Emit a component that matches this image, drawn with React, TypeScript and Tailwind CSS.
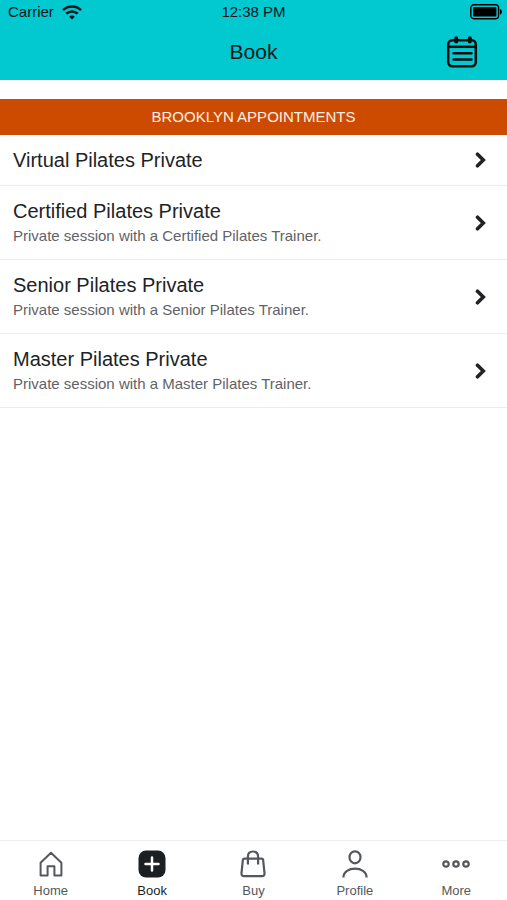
import type { ReactNode } from "react";

type Appointment = { title: string; description?: string };

const appointments: Appointment[] = [
  { title: "Virtual Pilates Private" },
  { title: "Certified Pilates Private", description: "Private session with a Certified Pilates Trainer." },
  { title: "Senior Pilates Private", description: "Private session with a Senior Pilates Trainer." },
  { title: "Master Pilates Private", description: "Private session with a Master Pilates Trainer." },
];

function WifiIcon() {
  return (
    <svg width="20" height="15" viewBox="0 0 20 15" fill="none" stroke="currentColor" strokeWidth="2.5" aria-hidden="true">
      <path d="M1 5.2C6 .3 14 .3 19 5.200" />
      <path d="M4.300 8.700c3.300-3.100 8.100-3.100 11.400 0" />
      <path d="M7.200 11.700c1.600-1.600 4-1.600 5.600 0L10 14.600Z" fill="currentColor" stroke="none" />
    </svg>
  );
}

function BatteryIcon() {
  return (
    <svg width="33" height="16" viewBox="0 0 33 16" fill="none" aria-hidden="true">
      <rect x="0.8" y="0.8" width="27.8" height="14" rx="3.2" stroke="currentColor" strokeWidth="1.4" />
      <rect x="3" y="3" width="23.4" height="9.6" rx="1" fill="currentColor" />
      <path d="M30 5c2.6.6 2.6 5 0 5.6Z" fill="currentColor" />
    </svg>
  );
}

function CalendarIcon() {
  return (
    <svg width="32" height="32" viewBox="0 0 32 32" fill="none" stroke="currentColor" strokeWidth="2.5" strokeLinecap="round" aria-hidden="true">
      <rect x="2.2" y="4.2" width="27.6" height="26" rx="4" />
      <path d="M2.2 10.8h27.6" strokeLinecap="butt" />
      <path d="M10.200 2.200v3.200M23.800 2.200v3.200" strokeWidth="4" />
      <path d="M7.500 17.200h18M7.500 23.600h18" strokeWidth="2.500" />
    </svg>
  );
}

function ChevronIcon() {
  return (
    <svg className="shrink-0" width="12" height="18" viewBox="0 0 12 18" fill="none" stroke="currentColor" strokeWidth="3.6" strokeLinecap="round" aria-hidden="true">
      <path d="M2.500 3.200 8.300 9l-5.800 5.800" />
    </svg>
  );
}

function LineIcon({ children }: { children: ReactNode }) {
  return (
    <svg width="28" height="28" viewBox="0 0 28 28" fill="none" stroke="currentColor" strokeWidth="2.2" aria-hidden="true">
      {children}
    </svg>
  );
}

const tabs: { label: string; active?: boolean; icon: ReactNode }[] = [
  {
    label: "Home",
    icon: (
      <LineIcon>
        <path strokeWidth="2" strokeLinejoin="round" d="M3.600 12.800 14 2.800l10.400 10v12.700h-7v-9.200h-6.800v9.200h-7Z" />
      </LineIcon>
    ),
  },
  {
    label: "Book",
    active: true,
    icon: (
      <LineIcon>
        <rect x="0.5" y="0.5" width="27" height="27" rx="7.5" fill="currentColor" stroke="none" />
        <path d="M14 7.500v13M7.500 14h13" stroke="white" strokeWidth="2.500" strokeLinecap="round" />
      </LineIcon>
    ),
  },
  {
    label: "Buy",
    icon: (
      <LineIcon>
        <path strokeLinejoin="round" d="M5.200 8.600h17.600q1.100 0 1.300 1.100l1.400 13.500q.2 3-2.600 3H5.100q-2.800 0-2.600-3L3.900 9.700q.2-1.100 1.300-1.100Z" />
        <path d="M8.900 14.500V6.800q0-5.300 5.100-5.300t5.100 5.300v7.700" />
      </LineIcon>
    ),
  },
  {
    label: "Profile",
    icon: (
      <LineIcon>
        <ellipse cx="14" cy="7.300" rx="5.500" ry="6" />
        <path d="M2.400 27.500C2.400 15.700 25.600 15.700 25.600 27.500" />
      </LineIcon>
    ),
  },
  {
    label: "More",
    icon: (
      <LineIcon>
        <circle cx="4" cy="14" r="2.700" />
        <circle cx="14" cy="14" r="2.700" />
        <circle cx="24" cy="14" r="2.700" />
      </LineIcon>
    ),
  },
];

export default function App() {
  return (
    <div className="flex min-h-screen flex-col bg-white font-['Liberation_Sans',Arial,sans-serif] text-[#202326]">
      <header className="bg-[#02c8d0] text-[#04181b]">
        <div className="grid h-6 grid-cols-3 items-center px-1 text-[15px]">
          <div className="flex items-center gap-2 pl-1">
            <span>Carrier</span>
            <WifiIcon />
          </div>
          <span className="text-center">12:38 PM</span>
          <div className="flex justify-end text-black">
            <BatteryIcon />
          </div>
        </div>
        <div className="grid h-14 grid-cols-3 items-center px-[29px]">
          <h1 className="col-start-2 text-center text-[21px]">Book</h1>
          <button type="button" aria-label="Calendar" className="justify-self-end text-[#020d0e]">
            <CalendarIcon />
          </button>
        </div>
      </header>

      <main className="flex-1 pt-[19px]">
        <h2 className="bg-[#cd4b00] py-2 text-center text-[15px] leading-5 text-[#fff1e6]">BROOKLYN APPOINTMENTS</h2>
        <ul>
          {appointments.map((item) => (
            <li key={item.title} className="border-b border-[#ececec]">
              <button type="button" className="flex w-full items-center justify-between py-3 pr-5 pl-[13px] text-left">
                <span>
                  <span className="block text-xl leading-[26px]">{item.title}</span>
                  {item.description && (
                    <span className="block text-[15px] leading-[23px] text-[#5f6368]">{item.description}</span>
                  )}
                </span>
                <ChevronIcon />
              </button>
            </li>
          ))}
        </ul>
      </main>

      <nav aria-label="Main" className="grid grid-cols-5 border-t border-[#f0f0f0] pt-[9px]">
        {tabs.map((tab) => (
          <a
            key={tab.label}
            href="#"
            aria-current={tab.active ? "page" : undefined}
            className={
              tab.active
                ? "flex flex-col items-center gap-1 text-[#1c1f21]"
                : "flex flex-col items-center gap-1 text-[#54585c]"
            }
          >
            {tab.icon}
            <span className="text-[13px] leading-[18px]">{tab.label}</span>
          </a>
        ))}
      </nav>
    </div>
  );
}
